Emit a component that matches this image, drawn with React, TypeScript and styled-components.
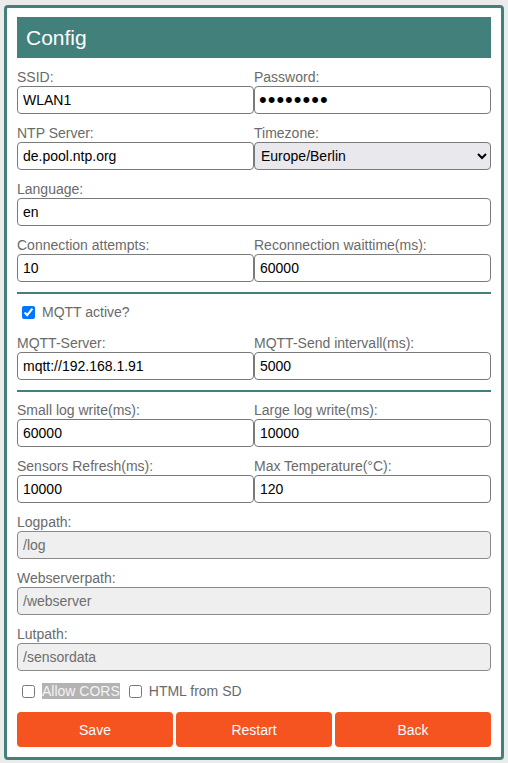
import { FC } from 'react';
import styled, { createGlobalStyle } from 'styled-components';

const GlobalStyle = createGlobalStyle`
  body {
    margin: 0;
    background: #ebebeb;
    font-family: "Liberation Sans", Arial, sans-serif;
  }
`;

const Card = styled.div`
  box-sizing: border-box;
  width: 500px;
  margin: 5px 0 0 4px;
  padding: 9px 10px 10px;
  background: #fff;
  border: 3px solid #41807b;
  border-radius: 4px;
`;

const Header = styled.h1`
  margin: 0 0 9px;
  height: 41px;
  padding: 0 9px;
  display: flex;
  align-items: center;
  background: #41807b;
  color: #fff;
  font-size: 21px;
  font-weight: normal;
`;

const Grid = styled.div<{ $top?: number }>`
  display: grid;
  grid-template-columns: 1fr 1fr;
  margin-top: ${p => p.$top || 0}px;
`;

const Field = styled.div<{ $wide?: boolean }>`
  grid-column: ${p => (p.$wide ? '1 / span 2' : 'auto')};
  display: flex;
  flex-direction: column;
  margin-bottom: 9px;
`;

const Label = styled.label`
  color: #6a6a6a;
  font-size: 14px;
  line-height: 16px;
  padding-top: 2px;
  margin-bottom: 1px;
`;

const Input = styled.input`
  box-sizing: border-box;
  width: 100%;
  height: 28px;
  margin: 0;
  padding: 0 5px;
  border: 1px solid #7a7a7a;
  border-radius: 4px;
  font-family: inherit;
  font-size: 14px;
  color: #000;
  background: #fff;

  &[type='password'] {
    font-size: 22px;
    letter-spacing: 1px;
    padding-left: 4px;
  }

  &:disabled {
    background: #efefef;
    color: #6d6d6d;
    border-color: #8a8a8a;
  }
`;

const Select = styled.select`
  box-sizing: border-box;
  width: 100%;
  height: 28px;
  margin: 0;
  padding: 0 2px;
  border: 1px solid #7a7a7a;
  border-radius: 4px;
  font-family: inherit;
  font-size: 14px;
  color: #000;
  background: #e9e9ed;
`;

const Divider = styled.hr`
  margin: 1px 0 0;
  border: none;
  height: 2px;
  background: #41807b;
`;

const CheckRow = styled.div<{ $top: number; $bottom: number }>`
  display: flex;
  align-items: center;
  gap: 7px;
  padding-left: 5px;
  margin: ${p => p.$top}px 0 ${p => p.$bottom}px;
  font-size: 14px;
  color: #6a6a6a;

  input {
    width: 13px;
    height: 13px;
    margin: 0;
  }
`;

const CheckLabel = styled.label<{ $selected?: boolean }>`
  background: ${p => (p.$selected ? '#b3b3b3' : 'transparent')};
  color: ${p => (p.$selected ? '#f4f4f4' : '#6a6a6a')};
  margin-right: 2px;
`;

const Buttons = styled.div`
  display: grid;
  grid-template-columns: repeat(3, 1fr);
  gap: 3px;
`;

const Button = styled.button`
  height: 35px;
  border: none;
  border-radius: 4px;
  background: #f55320;
  color: #fff;
  font-family: inherit;
  font-size: 14px;
`;

type FieldDef = {
  label: string;
  value: string;
  type?: string;
  wide?: boolean;
  disabled?: boolean;
};

const renderField = (f: FieldDef) => (
  <Field key={f.label} $wide={f.wide}>
    <Label>{f.label}</Label>
    <Input type={f.type || 'text'} defaultValue={f.value} disabled={f.disabled} />
  </Field>
);

const network: FieldDef[] = [
  { label: 'SSID:', value: 'WLAN1' },
  { label: 'Password:', value: 'secret12', type: 'password' },
];

const connection: FieldDef[] = [
  { label: 'Language:', value: 'en', wide: true },
  { label: 'Connection attempts:', value: '10' },
  { label: 'Reconnection waittime(ms):', value: '60000' },
];

const logging: FieldDef[] = [
  { label: 'Small log write(ms):', value: '60000' },
  { label: 'Large log write(ms):', value: '10000' },
  { label: 'Sensors Refresh(ms):', value: '10000' },
  { label: 'Max Temperature(°C):', value: '120' },
  { label: 'Logpath:', value: '/log', wide: true, disabled: true },
  { label: 'Webserverpath:', value: '/webserver', wide: true, disabled: true },
  { label: 'Lutpath:', value: '/sensordata', wide: true, disabled: true },
];

const App: FC = () => (
  <>
    <GlobalStyle />
    <Card>
      <Header>Config</Header>
      <Grid>
        {network.map(renderField)}
        <Field>
          <Label>NTP Server:</Label>
          <Input defaultValue="de.pool.ntp.org" />
        </Field>
        <Field>
          <Label>Timezone:</Label>
          <Select defaultValue="Europe/Berlin">
            <option>Europe/Berlin</option>
            <option>Europe/London</option>
          </Select>
        </Field>
        {connection.map(renderField)}
      </Grid>
      <Divider />
      <CheckRow $top={10} $bottom={13}>
        <input type="checkbox" defaultChecked />
        <CheckLabel>MQTT active?</CheckLabel>
      </CheckRow>
      <Grid>
        {renderField({ label: 'MQTT-Server:', value: 'mqtt://192.168.1.91' })}
        {renderField({ label: 'MQTT-Send intervall(ms):', value: '5000' })}
      </Grid>
      <Divider />
      <Grid $top={8}>{logging.map(renderField)}</Grid>
      <CheckRow $top={3} $bottom={13}>
        <input type="checkbox" />
        <CheckLabel $selected>Allow CORS</CheckLabel>
        <input type="checkbox" />
        <CheckLabel>HTML from SD</CheckLabel>
      </CheckRow>
      <Buttons>
        <Button>Save</Button>
        <Button>Restart</Button>
        <Button>Back</Button>
      </Buttons>
    </Card>
  </>
);

export default App;
